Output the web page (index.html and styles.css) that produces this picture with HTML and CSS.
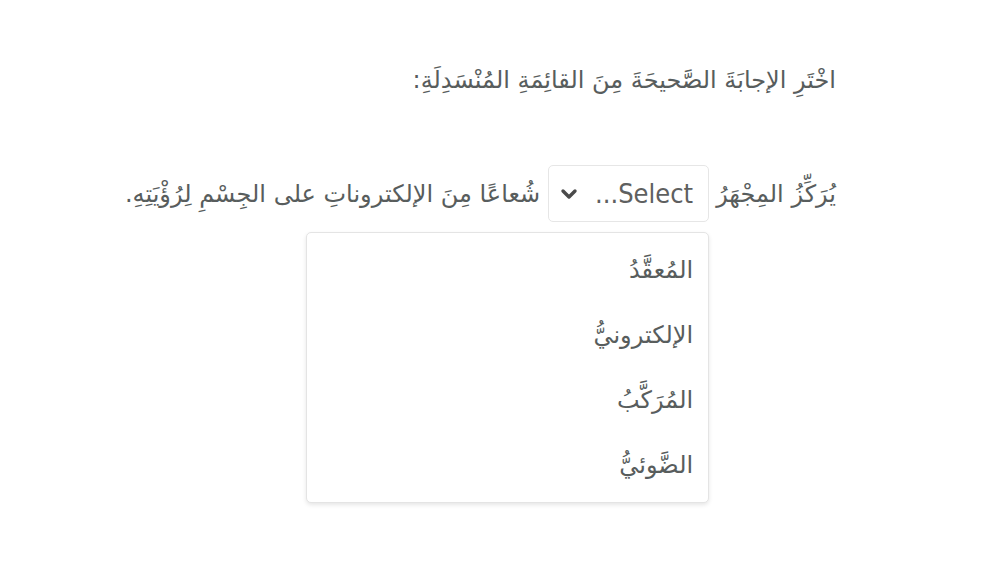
FILE: index.html
```html
<!DOCTYPE html>
<html lang="ar" dir="rtl">
<head>
<meta charset="utf-8">
<link rel="stylesheet" href="styles.css">
</head>
<body>
<main class="question">
  <p class="prompt">اخْتَرِ الإجابَةَ الصَّحيحَةَ مِنَ القائِمَةِ المُنْسَدِلَةِ:</p>
  <p class="sentence">
    <span>يُرَكِّزُ المِجْهَرُ</span>
    <span class="select-wrap">
      <span class="select">
        <span class="select-label">Select...</span>
        <svg class="chevron" width="18" height="12" viewBox="0 0 18 12"><path d="M3 3 L9 9 L15 3" fill="none" stroke="#4a4a4a" stroke-width="3.4" stroke-linecap="round" stroke-linejoin="round"/></svg>
      </span>
      <span class="menu">
        <span class="option">المُعقَّدُ</span>
        <span class="option">الإلكترونيُّ</span>
        <span class="option">المُرَكَّبُ</span>
        <span class="option">الضَّوئيُّ</span>
      </span>
    </span>
    <span>شُعاعًا مِنَ الإلكتروناتِ على الجِسْمِ لِرُؤْيَتِهِ.</span>
  </p>
</main>
</body>
</html>
```
FILE: styles.css
```css
html, body {
  margin: 0;
  padding: 0;
  background: #ffffff;
}
body {
  width: 1000px;
  height: 562px;
  overflow: hidden;
  font-family: "DejaVu Sans", "Liberation Sans", sans-serif;
  color: #585d5d;
}
.question {
  direction: rtl;
  padding: 0 164px 0 0;
}
.prompt {
  margin: 0;
  padding-top: 64px;
  font-size: 24px;
  line-height: 32px;
}
.sentence {
  margin: 69px 0 0 0;
  font-size: 24px;
  line-height: 32px;
  display: flex;
  align-items: center;
  gap: 8px;
}
.select-wrap {
  position: relative;
  display: inline-block;
  margin-right: -1px;
}
.select {
  box-sizing: border-box;
  width: 161px;
  height: 57px;
  border: 1px solid #e6e6e6;
  border-radius: 5px;
  display: flex;
  align-items: center;
  justify-content: space-between;
  padding: 0 15px 0 11px;
}
.select-label {
  font-family: "DejaVu Sans Condensed", "DejaVu Sans", sans-serif;
  font-stretch: condensed;
  font-size: 27px;
  line-height: 32px;
  color: #5e6060;
  direction: rtl;
}
.chevron {
  display: block;
}
.menu {
  position: absolute;
  top: 67px;
  right: 0;
  box-sizing: border-box;
  width: 403px;
  height: 271px;
  background: #fff;
  border: 1px solid #e4e4e4;
  border-radius: 5px;
  box-shadow: 0 2px 4px rgba(0,0,0,0.10);
  padding: 4px 0 0 0;
  display: flex;
  flex-direction: column;
}
.option {
  height: 65px;
  display: flex;
  align-items: center;
  padding-right: 15px;
  font-size: 24px;
}
```
